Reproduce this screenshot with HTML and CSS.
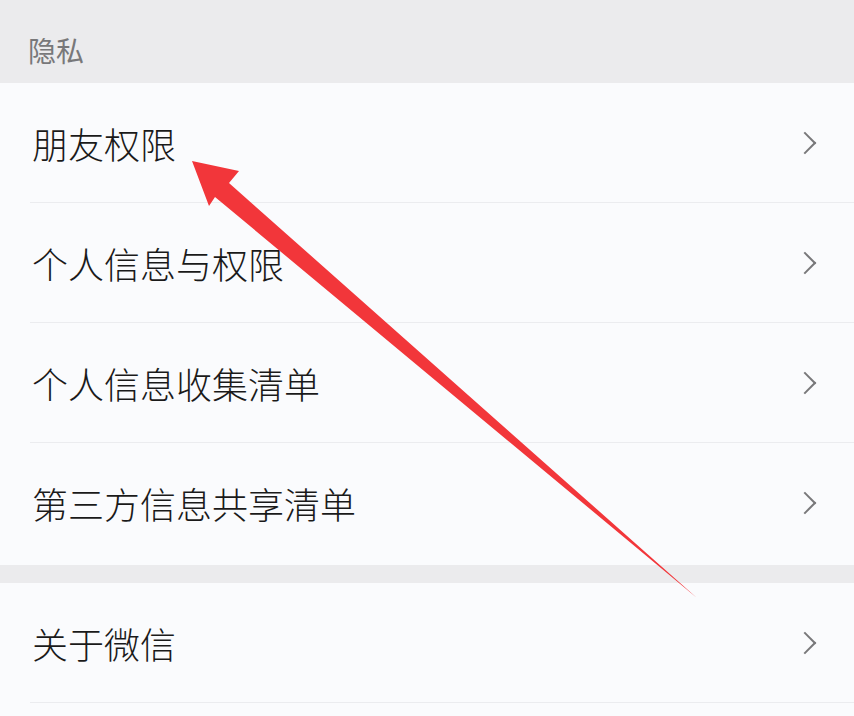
FILE: index.html
```html
<!DOCTYPE html>
<html lang="zh-CN">

<head>
  <meta charset="UTF-8">
  <meta name="viewport" content="width=device-width, initial-scale=1.0">
  <title>设置 | 隐私</title>
  <link rel="stylesheet" href="styles.css">
</head>

<body>
  <div class="settings">
    <!-- 分组标题 -->
    <div class="section-title">隐私</div>

    <div class="group group-privacy">
      <div class="row">
        <span class="row-label">朋友权限</span>
        <span class="chevron"></span>
      </div>
      <div class="row">
        <span class="row-label">个人信息与权限</span>
        <span class="chevron"></span>
      </div>
      <div class="row">
        <span class="row-label">个人信息收集清单</span>
        <span class="chevron"></span>
      </div>
      <div class="row">
        <span class="row-label">第三方信息共享清单</span>
        <span class="chevron"></span>
      </div>
    </div>

    <div class="gap"></div>

    <div class="group">
      <div class="row">
        <span class="row-label">关于微信</span>
        <span class="chevron"></span>
      </div>
    </div>

    <!-- 红色箭头标注 -->
    <svg class="mark" width="854" height="716" viewBox="0 0 854 716">
      <polygon points="192,161 239,171 229,183 697,598 215,197 209,206" fill="#f2363a" />
    </svg>
  </div>
</body>

</html>
```

FILE: styles.css
```css
:root {
  --page: #ebebed;
  --cell: #fafbfd;
  --line: #ebecef;
  --text: #1a1a1a;
  --muted: #78787a;
}

body {
  margin: 0;
  background: var(--cell);
  font-family: "Noto Sans CJK SC", "Noto Sans", sans-serif;
  color: var(--text);
}

.settings {
  position: relative;
  width: 854px;
  height: 716px;
  overflow: hidden;
  background: var(--cell);
}

.section-title {
  height: 83px;
  box-sizing: border-box;
  padding: 33px 0 0 28px;
  background: var(--page);
  color: var(--muted);
  font-size: 28px;
  line-height: 34px;
}

.group {
  background: var(--cell);
}

.group-privacy {
  padding-bottom: 2px;
}

.row {
  height: 120px;
  box-sizing: border-box;
  margin-left: 30px;
  padding-right: 40px;
  border-bottom: 1px solid var(--line);
  display: flex;
  align-items: center;
  justify-content: space-between;
}

.group-privacy .row:last-child {
  border-bottom: none;
}

.row-label {
  margin-left: 2px;
  font-size: 36px;
  font-weight: 300;
  line-height: 44px;
}

.chevron {
  width: 14px;
  height: 14px;
  margin-right: 1px;
  border-top: 2px solid var(--muted);
  border-right: 2px solid var(--muted);
  transform: rotate(45deg);
}

.gap {
  height: 18px;
  background: var(--page);
}

.mark {
  position: absolute;
  top: 0;
  left: 0;
}
```
